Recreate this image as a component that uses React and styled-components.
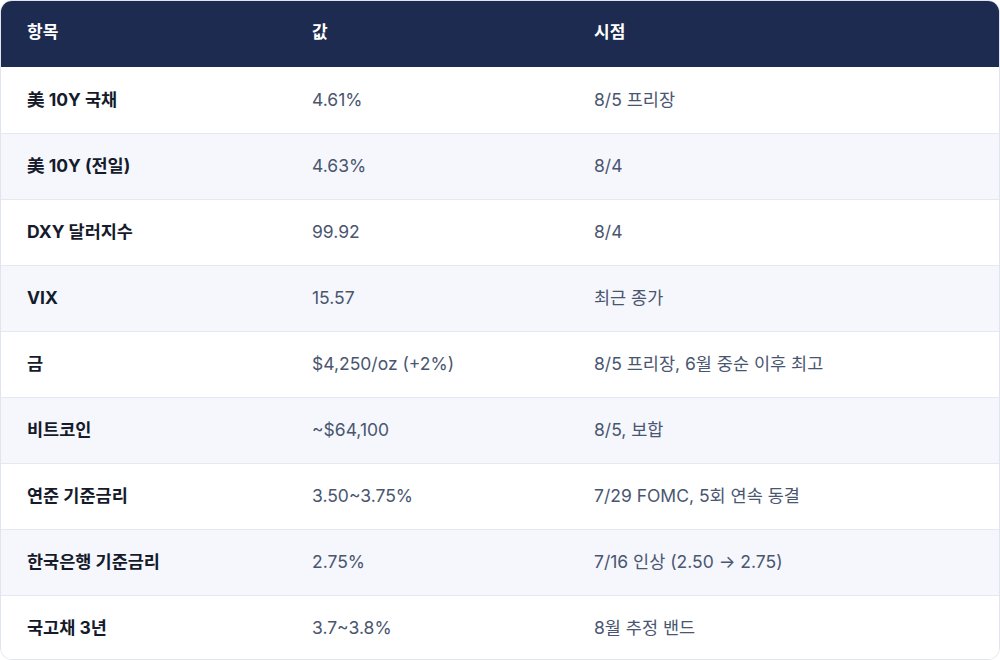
import styled, { createGlobalStyle } from 'styled-components';

const GlobalStyle = createGlobalStyle`
  html, body { margin: 0; padding: 0; background: #ffffff; }
  body { font-family: "Inter", "Noto Sans CJK KR", sans-serif; }
`;

const rows = [
  ['美 10Y 국채', '4.61%', '8/5 프리장'],
  ['美 10Y (전일)', '4.63%', '8/4'],
  ['DXY 달러지수', '99.92', '8/4'],
  ['VIX', '15.57', '최근 종가'],
  ['금', '$4,250/oz (+2%)', '8/5 프리장, 6월 중순 이후 최고'],
  ['비트코인', '~$64,100', '8/5, 보합'],
  ['연준 기준금리', '3.50~3.75%', '7/29 FOMC, 5회 연속 동결'],
  ['한국은행 기준금리', '2.75%', '7/16 인상 (2.50 → 2.75)'],
  ['국고채 3년', '3.7~3.8%', '8월 추정 밴드'],
];

const App = () => {
  return (
    <>
      <GlobalStyle />
      <Table>
        <HeadRow>
          <HeadCell>항목</HeadCell>
          <HeadCell>값</HeadCell>
          <HeadCell>시점</HeadCell>
        </HeadRow>
        {rows.map((r, i) => (
          <Row key={i} $alt={i % 2 === 1} $first={i === 0}>
            <NameCell>{r[0]}</NameCell>
            <Cell>{r[1]}</Cell>
            <Cell>{r[2]}</Cell>
          </Row>
        ))}
      </Table>
    </>
  );
};

export default App;

const Table = styled.div`
  width: 1000px;
  height: 660px;
  box-sizing: border-box;
  border: 1px solid #dfe4ee;
  border-radius: 12px;
  overflow: hidden;
  display: flex;
  flex-direction: column;
`;

const HeadRow = styled.div`
  display: grid;
  grid-template-columns: 285px 282px 1fr;
  height: 66px;
  flex-shrink: 0;
  box-sizing: border-box;
  padding-bottom: 4px;
  background: #1e2b50;
  align-items: center;
`;

const HeadCell = styled.div`
  padding: 0 26px;
  color: #ffffff;
  font-size: 17px;
  font-weight: 700;
  line-height: 1.2;
`;

const Row = styled.div`
  display: grid;
  grid-template-columns: 285px 282px 1fr;
  height: 66px;
  flex-shrink: 0;
  align-items: center;
  box-sizing: border-box;
  padding-bottom: 2px;
  background: ${(p) => (p.$alt ? '#f5f7fc' : '#ffffff')};
  border-top: ${(p) => (p.$first ? 'none' : '1px solid #e3e8f2')};
`;

const Cell = styled.div`
  padding: 0 26px;
  color: #4a5670;
  font-size: 17.5px;
  font-weight: 400;
  line-height: 1.2;
`;

const NameCell = styled(Cell)`
  color: #151b2b;
  font-weight: 700;
`;
